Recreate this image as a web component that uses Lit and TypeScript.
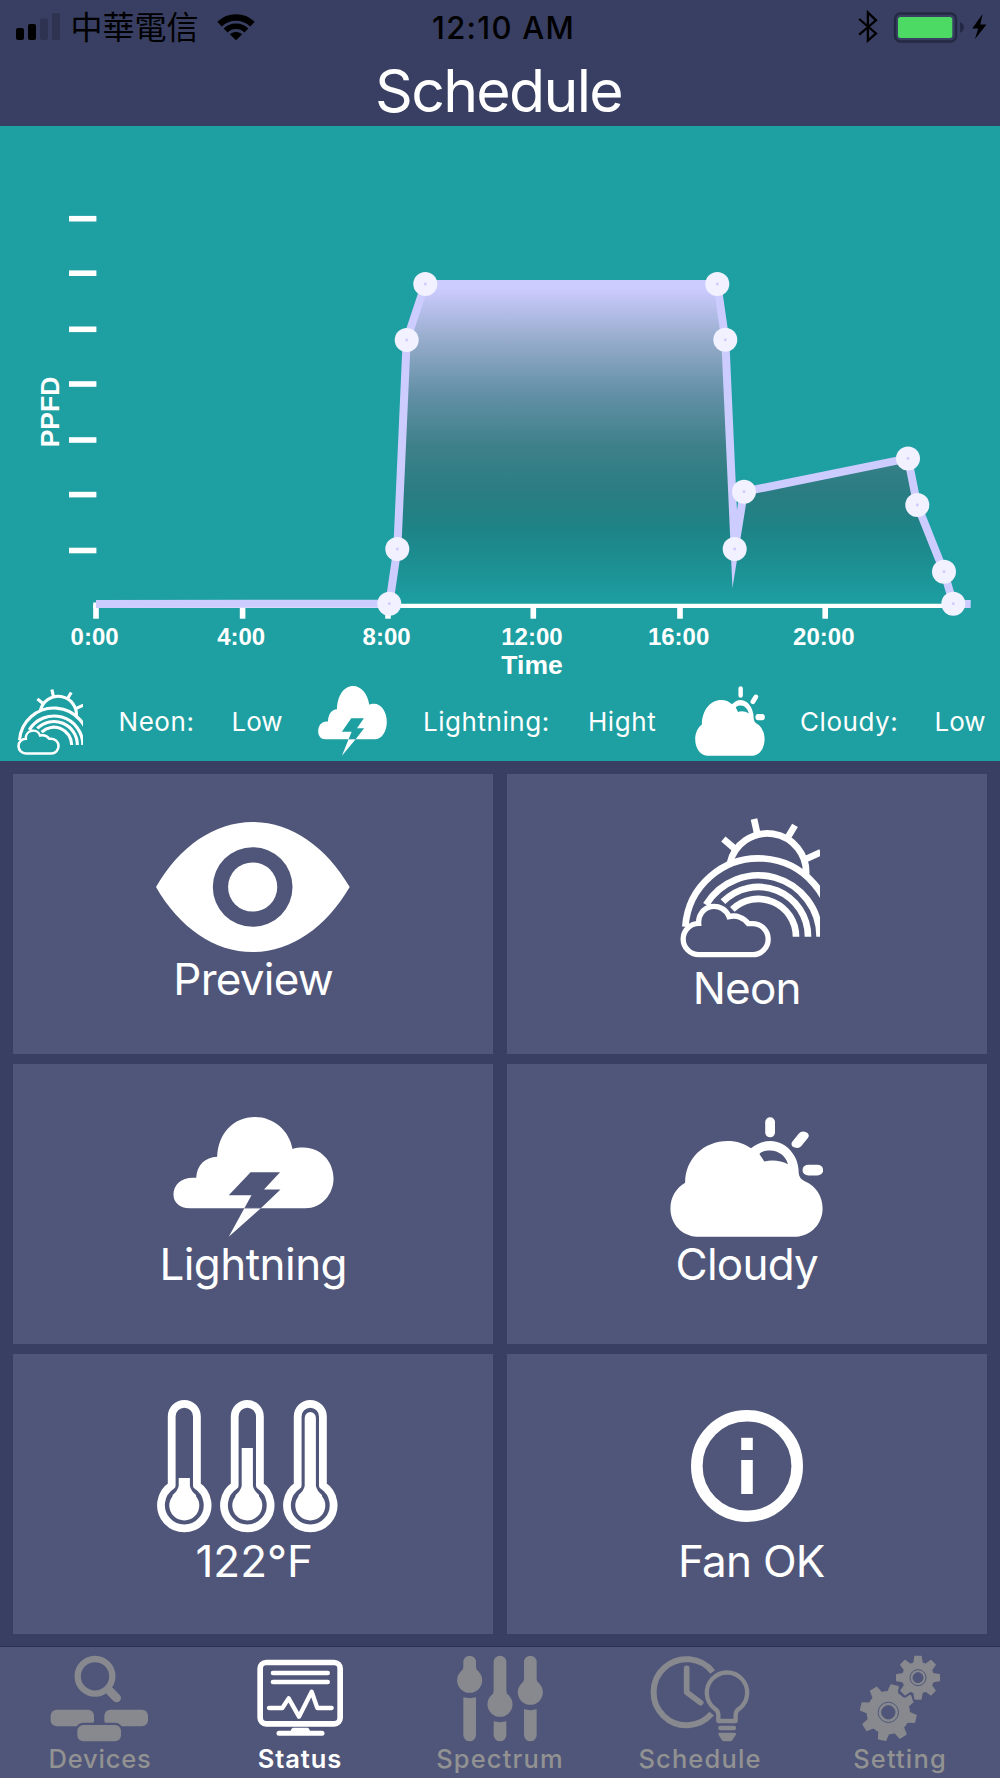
import { LitElement, html, svg, css } from "lit";
import { customElement, property } from "lit/decorators.js";

const neonIcon = html`<svg class="icon" viewBox="90 54 420 420" preserveAspectRatio="none" fill="none" stroke="#fff" stroke-width="20">
  <path d="M239 192A116 116 0 0 1 468 226" />
  <path d="M220 117L253 145M312 57L322 102M435 76L413 113M512 157L468 177" />
  <path d="M106 380A220 220 0 0 1 545 410M168 314A184 184 0 0 1 509 410M219 305A149 149 0 0 1 474 410M247 328A113 113 0 0 1 438 410" />
  <path stroke-width="16" d="M147 464A47 47 0 0 1 146 370A47 47 0 0 1 237 350A54 54 0 0 1 295 371H308A46.500 46.500 0 0 1 308 464Z" />
</svg>`;

const lightningIcon = html`<svg class="icon" viewBox="73 80 361 359" preserveAspectRatio="none" fill="#fff">
  <path fill-rule="evenodd" d="M110 353C88 353 74 336 74 312C74 281 94 258 125 262C127 222 145 201 172 199C174 130 208 80 257 80C298 80 334 120 341 176C347 172 355 171 366 171C404 171 433 213 433 264C433 313 405 353 370 353ZM247 245H313L277 297H314L270 353L198 438L233 353L249 314H198Z" />
  <path stroke="#8f95b5" stroke-width="1.500" d="M233 353H270" />
</svg>`;

const cloudyIcon = html`<svg class="icon" viewBox="1186 80 345 361" preserveAspectRatio="none" fill="#fff">
  <path fill-rule="evenodd" d="M1246 440C1212 437 1187 402 1187 355C1187 322 1199 295 1220 278C1220 205 1262 152 1316 152C1336 152 1354 160 1368 174C1382 160 1396 152 1412 152C1446 152 1474 195 1475 240C1475 256 1478 266 1489 273C1514 287 1529 318 1529 355C1529 400 1504 437 1470 440ZM1387 191C1392 183 1401 181 1412 181C1429 181 1447 198 1451 222C1435 210 1414 208 1398 214Z" />
  <rect x="1400" y="81" width="22" height="60" rx="11" ry="14" />
  <path stroke="#fff" stroke-width="24" stroke-linecap="round" d="M1486 136L1471 161" />
  <rect x="1484" y="224" width="46" height="32" rx="13" ry="15" />
</svg>`;

const previewIcon = html`<svg class="icon" viewBox="76 62 584 396">
  <path fill="#fff" fill-rule="evenodd" d="M76 260C146 138 252 64 367 64S588 138 659 260C588 382 482 456 367 456S146 382 76 260ZM247 260A120 120 0 1 0 487 260A120 120 0 1 0 247 260Z" />
  <circle cx="367" cy="260" r="74" fill="#fff" />
</svg>`;

const thermometer = (x: number, stem: string) => svg`<g transform="translate(${x} 0)">
  <path fill="none" stroke="#fff" stroke-width="7.800" stroke-linejoin="round" d="M14.700 85.500V16.500A12.600 12.600 0 0 1 39.900 16.500V85.500A23.300 23.300 0 1 1 14.700 85.500Z" />
  <circle cx="27.300" cy="105.500" r="15" fill="#fff" />
  <path fill="#fff" d="${stem}" />
</g>`;

const thermometerIcon = html`<svg class="icon" viewBox="0 0 180.6 133.6">
  ${thermometer(0, "M21.700 78H32.900V86Q34 91 39 95V105H15.600V95Q20.600 91 21.700 86Z")}
  ${thermometer(63, "M21.700 48H32.900V86Q34 91 39 95V105H15.600V95Q20.600 91 21.700 86Z")}
  ${thermometer(126, "M21.700 18A5.600 6 0 0 1 32.900 18V86Q34 91 39 95V105H15.600V95Q20.600 91 21.700 86Z")}
</svg>`;

const infoIcon = html`<svg class="icon" viewBox="0 0 112 112" fill="#fff">
  <circle cx="56" cy="56" r="50.200" fill="none" stroke="#fff" stroke-width="11.600" />
  <rect x="50.200" y="27.800" width="11.600" height="12.200" />
  <rect x="50.200" y="50" width="11.600" height="34" />
</svg>`;

const gear = (cx: number, cy: number, outer: number, body: number, tooth: number, turn: number) => svg`
  <g transform="translate(${cx} ${cy}) rotate(${turn})">
    <circle r="${body}" />
    ${[0, 45, 90, 135, 180, 225, 270, 315].map(
      (a) => svg`<path transform="rotate(${a})" d="M${-tooth * 0.65} ${-body + 4}L${-tooth / 2} ${-outer + 2}Q${-tooth / 2} ${-outer} ${-tooth / 2 + 2} ${-outer}H${tooth / 2 - 2}Q${tooth / 2} ${-outer} ${tooth / 2} ${-outer + 2}L${tooth * 0.65} ${-body + 4}Z" />`
    )}
  </g>`;

const tabs = [
  {
    label: "Devices",
    cls: "devices",
    icon: html`<svg class="glyph" viewBox="150 100 300 264" fill="currentColor">
      <circle cx="285" cy="167" r="52" fill="none" stroke="currentColor" stroke-width="19" />
      <path stroke="currentColor" stroke-width="26" stroke-linecap="round" d="M331 213L350 232" />
      <path stroke="currentColor" stroke-width="18" d="M319 201L335 217" />
      <rect x="152" y="267" width="130" height="50" rx="18" />
      <rect x="313" y="267" width="131" height="50" rx="18" />
      <rect x="226" y="306" width="143" height="62" rx="24" fill="#505679" />
      <rect x="232" y="313" width="131" height="49" rx="18" />
    </svg>`,
  },
  {
    label: "Status",
    cls: "status active",
    icon: html`<svg class="glyph" viewBox="750 100 300 264" fill="none" stroke="currentColor" stroke-linecap="round" stroke-linejoin="round">
      <rect x="780.500" y="125.500" width="240" height="184" rx="18" stroke-width="17" />
      <path stroke-width="14" d="M819 157H983M819 184H983" />
      <path stroke-width="13" d="M807 262H847L866 233L897 288L935 213L952 262H995" />
      <path stroke-width="15" d="M837 338H966" />
      <path fill="currentColor" stroke="none" d="M880 321H922Q928 321 930 332H872Q874 321 880 321Z" />
    </svg>`,
  },
  {
    label: "Spectrum",
    cls: "spectrum",
    icon: html`<svg class="glyph" viewBox="1350 100 300 264" fill="currentColor">
      ${[
        [1409, 179],
        [1500, 251],
        [1591, 215],
      ].map(
        ([x, y]) => svg`
        <path d="M${x - 19} 124A19 19 0 0 1 ${x + 19} 124V${y - 40}Q${x + 19} ${y - 30} ${x + 27} ${y - 26}H${x - 27}Q${x - 19} ${y - 30} ${x - 19} ${y - 40}Z" />
        <circle cx="${x}" cy="${y}" r="37.500" />
        <path d="M${x - 19} ${y + 51}Q${x} ${y + 56} ${x + 19} ${y + 51}V343A19 19 0 0 1 ${x - 19} 343Z" />`
      )}
    </svg>`,
  },
  {
    label: "Schedule",
    cls: "schedule",
    icon: html`<svg class="glyph" viewBox="450 100 300 264" fill="none" stroke="currentColor" stroke-linejoin="round">
      <path stroke-width="18" d="M638 154A99 99 0 1 0 635 279" />
      <path stroke-width="17" stroke-linecap="round" d="M560 143V215L602 246" />
      <path stroke-width="13" d="M655 301V282Q655 270 643 263A60.500 60.500 0 1 1 719 263Q707 270 707 282V301Z" />
      <path stroke-width="13" stroke-linecap="round" d="M661 322H702" />
      <path fill="currentColor" stroke="none" d="M659 336H704Q710 337 707 343L698 357Q695 362 690 362H673Q668 362 665 357L656 343Q653 337 659 336Z" />
    </svg>`,
  },
  {
    label: "Setting",
    cls: "setting",
    icon: html`<svg class="glyph" viewBox="1050 100 300 264" fill="currentColor">
      ${gear(1165, 276, 85, 65, 26, 13)}
      <g stroke="#505679" stroke-width="14" stroke-linejoin="round">${gear(1254, 171, 66, 48, 20, 0)}</g>
      ${gear(1254, 171, 66, 48, 22, 0)}
      <g stroke="#505679" stroke-width="3" fill="none">
        <circle cx="1165" cy="275" r="30.500" />
        <circle cx="1165" cy="275" r="20" fill="#505679" />
        <circle cx="1254" cy="171" r="24" />
        <circle cx="1254" cy="171" r="15" fill="#505679" />
      </g>
    </svg>`,
  },
];

const points: [number, number][] = [
  [389.3, 603.7],
  [397.3, 549],
  [406.7, 340],
  [425.3, 284],
  [717.3, 284],
  [725.3, 339.8],
  [734.7, 549],
  [744, 491.7],
  [908, 458.4],
  [917.3, 505],
  [944, 571.7],
  [953.3, 603.7],
];
const polyline = points.map(([x, y]) => `L${x} ${y}`).join("");
const hours: [string, number][] = [
  ["0:00", 96],
  ["4:00", 242.6],
  ["8:00", 388],
  ["12:00", 533.3],
  ["16:00", 680],
  ["20:00", 825.2],
];
const levels = [218.7, 273.2, 329.3, 384, 440, 494.6, 550.5];

@customElement("schedule-chart")
export class ScheduleChart extends LitElement {
  static styles = css`
    :host { display: block; height: 560px; }
    .plot { display: block; width: 100%; height: 100%; }
    .axis { font: bold 24px "Liberation Sans", Arial, sans-serif; fill: #fff; text-anchor: middle; }
    .name { font-size: 26.500px; }
  `;
  render() {
    return html`<svg class="plot" viewBox="0 126 1000 560">
      <defs>
        <linearGradient id="fade" gradientUnits="userSpaceOnUse" x1="0" y1="288" x2="0" y2="604">
          <stop offset="0" stop-color="#ccccff" />
          <stop offset="0.170" stop-color="#94abca" />
          <stop offset="0.330" stop-color="#6490a7" />
          <stop offset="0.500" stop-color="#3e808a" />
          <stop offset="0.650" stop-color="#297d82" />
          <stop offset="0.760" stop-color="#1e8386" />
          <stop offset="0.880" stop-color="#1c9093" />
          <stop offset="1" stop-color="#1c9fa1" />
        </linearGradient>
      </defs>
      ${levels.map((y) => svg`<rect x="69" y="${y - 2.8}" width="27.400" height="5.600" fill="#fff" />`)}
      <path stroke="#fff" stroke-width="5.600" d="M93.200 605.200H970" />
      ${hours.map(
        ([label, x]) => svg`<rect x="${x - 2.8}" y="605" width="5.600" height="13.700" fill="#fff" />
          <text class="axis" x="${x - 1.4}" y="645.400">${label}</text>`
      )}
      <text class="axis name" x="532" y="674.300">Time</text>
      <text class="axis name" transform="translate(58.500 412) rotate(-90)">PPFD</text>
      <path fill="url(#fade)" d="M389.300 603.700${polyline}Z" />
      <path fill="none" stroke="#ccccff" stroke-width="8" stroke-miterlimit="10" d="M96 604${polyline}L970.700 604" />
      ${points.map(([x, y]) => svg`<circle cx="${x}" cy="${y}" r="12" fill="#f1f1ff" /><circle cx="${x}" cy="${y}" r="1.400" fill="#ccccff" />`)}
    </svg>`;
  }
}

@customElement("status-bar")
export class StatusBar extends LitElement {
  static styles = css`
    :host {
      display: grid; grid-template-columns: 432px 1fr auto; height: 50px; color: #000;
      font-family: Inter, "Noto Sans CJK TC", sans-serif;
    }
    .left { display: flex; padding-left: 16px; }
    .bars { width: 44px; height: 50px; flex: none; }
    .carrier { font: 400 32px/50px "Noto Sans CJK TC", sans-serif; margin-left: 10.500px; width: 128px; white-space: nowrap; }
    .wifi { width: 38px; height: 50px; margin-left: 18.500px; flex: none; }
    .time { font-size: 31px; font-weight: 500; line-height: 55px; letter-spacing: 1.300px; white-space: nowrap; }
    .right { width: 150px; height: 50px; }
  `;
  render() {
    return html`
      <div class="left">
        <svg class="bars" viewBox="16 0 44 50">
          <rect x="16" y="28" width="8" height="12" rx="2" /><rect x="28" y="24" width="8" height="16" rx="2" />
          <rect x="40" y="18.500" width="8" height="21.500" rx="2" fill="#2d3350" /><rect x="52" y="13.300" width="8" height="26.700" rx="2" fill="#2d3350" />
        </svg>
        <span class="carrier">中華電信</span>
        <svg class="wifi" viewBox="217 0 38 50" fill="none" stroke="#000">
          <path stroke-width="6.400" d="M219.500 24.100A24 24 0 0 1 252.500 24.100" />
          <path stroke-width="5.600" d="M225.600 30.400A15 15 0 0 1 246.400 30.400" />
          <path fill="#000" stroke="none" d="M236 40.300L229.800 34.300Q236 29 242.200 34.300Z" />
        </svg>
      </div>
      <span class="time">12:10 AM</span>
      <svg class="right" viewBox="850 0 150 50">
        <path fill="none" stroke="#000" stroke-width="2.300" d="M859.200 19L876 33.400L867.900 40.500V12.500L876 20.300L859.200 34.600" />
        <rect x="895" y="13.500" width="61" height="28" rx="5.500" fill="none" stroke="#242943" stroke-width="2.400" />
        <rect x="898" y="17" width="54.300" height="21" rx="2.500" fill="#4cd964" />
        <path fill="#242943" d="M960 22Q964 24 964 27.400T960 32.800Z" />
        <path d="M982.500 14L972.300 28.600H978.200L975 39L986.500 24.400H980.300Z" />
      </svg>`;
  }
}

@customElement("action-card")
export class ActionCard extends LitElement {
  @property() label = "";
  static styles = css`
    :host { display: flex; flex-direction: column; align-items: center; background: #505679; letter-spacing: -0.750px; }
    .label { font: 400 44px/52px Inter, sans-serif; color: #fff; white-space: nowrap; }
  `;
  render() {
    return html`<slot></slot><span class="label">${this.label}</span>`;
  }
}

@customElement("app-root")
export class AppRoot extends LitElement {
  static styles = css`
    :host {
      display: flex; flex-direction: column; width: 1000px; height: 1778px; overflow: hidden;
      background: #383f62; color: #fff; font-family: Inter, sans-serif;
    }
    .title { margin: 0; height: 76px; padding: 3px 3px 0 0; box-sizing: border-box; font-size: 59px; font-weight: 400; line-height: 76px; letter-spacing: -1.700px; text-align: center; }
    .panel { height: 635px; background: #1e9fa2; }
    .legend {
      display: grid; height: 75px; font-size: 26px; line-height: 42px; white-space: nowrap;
      grid-template-columns: 17px 101.500px 113px 86.500px 105px 165px 107px 105px 134.500px 1fr;
    }
    .legend .sym { display: block; height: 70px; }
    .legend .txt { padding-top: 14.700px; }
    .legend .wide { letter-spacing: 0.550px; }
    .legend .icon { display: block; }
    .legend .neon .icon { width: 66px; height: 66px; margin-top: 3px; }
    .legend .lightning .icon { width: 69px; height: 70px; }
    .legend .cloudy .icon { width: 70px; height: 70px; }
    .cards { display: grid; grid-template-columns: 1fr 1fr; grid-auto-rows: 279.600px; gap: 10.400px 13.500px; padding: 13px 13.200px 12.400px; }
    .cards .icon { display: block; }
    .card { box-sizing: border-box; }
    .card.preview { padding-top: 46.500px; }
    .preview .icon { width: 194px; height: 132px; margin: 0 1px 0.500px 0; }
    .card.neon { padding-top: 44px; }
    .card.neon .icon { width: 140px; height: 140px; margin: 0 0 3.500px 6px; }
    .card.lightning, .card.cloudy { padding-top: 53.500px; }
    .card.lightning { letter-spacing: -0.550px; }
    .card.lightning .icon { width: 161px; height: 120px; margin: 0 0 0.500px 0; }
    .card.cloudy .icon { width: 153.500px; height: 120px; margin: 0 0.500px 0.500px 0; }
    .card.temp { padding-top: 46.500px; padding-left: 2px; letter-spacing: 0; }
    .temp .icon { width: 180.600px; height: 133.600px; margin: 0 14px 1px 0; }
    .card.fan { padding-top: 56px; padding-left: 9px; }
    .fan .icon { width: 112px; height: 112px; margin: 0 9px 13px 0; }
    .tabs { display: grid; grid-template-columns: repeat(5, 1fr); flex: 1; background: #505679; border-top: 1px solid #2b3150; }
    .tab { display: flex; flex-direction: column; align-items: center; padding-top: 6.600px; color: #88898f; font-size: 25.500px; font-weight: 500; line-height: 30px; letter-spacing: 1.150px; }
    .tab.active { color: #fff; font-weight: 600; letter-spacing: 0.900px; }
    .tab.devices { letter-spacing: 0.800px; }
    .glyph { width: 100px; height: 88px; flex: none; }
    .name { margin-top: 2.600px; color: #929292; }
    .active .name { color: #fff; }
  `;
  render() {
    return html`
      <status-bar></status-bar>
      <h1 class="title">Schedule</h1>
      <section class="panel">
        <schedule-chart></schedule-chart>
        <div class="legend">
          <span></span>
          <span class="sym neon">${neonIcon}</span><span class="txt wide">Neon:</span><span class="txt">Low</span>
          <span class="sym lightning">${lightningIcon}</span><span class="txt wide">Lightning:</span><span class="txt wide">Hight</span>
          <span class="sym cloudy">${cloudyIcon}</span><span class="txt wide">Cloudy:</span><span class="txt">Low</span>
        </div>
      </section>
      <main class="cards">
        <action-card class="card preview" label="Preview">${previewIcon}</action-card>
        <action-card class="card neon" label="Neon">${neonIcon}</action-card>
        <action-card class="card lightning" label="Lightning">${lightningIcon}</action-card>
        <action-card class="card cloudy" label="Cloudy">${cloudyIcon}</action-card>
        <action-card class="card temp" label="122°F">${thermometerIcon}</action-card>
        <action-card class="card fan" label="Fan OK">${infoIcon}</action-card>
      </main>
      <nav class="tabs">
        ${tabs.map((t) => html`<div class="tab ${t.cls}">${t.icon}<span class="name">${t.label}</span></div>`)}
      </nav>
    `;
  }
}
